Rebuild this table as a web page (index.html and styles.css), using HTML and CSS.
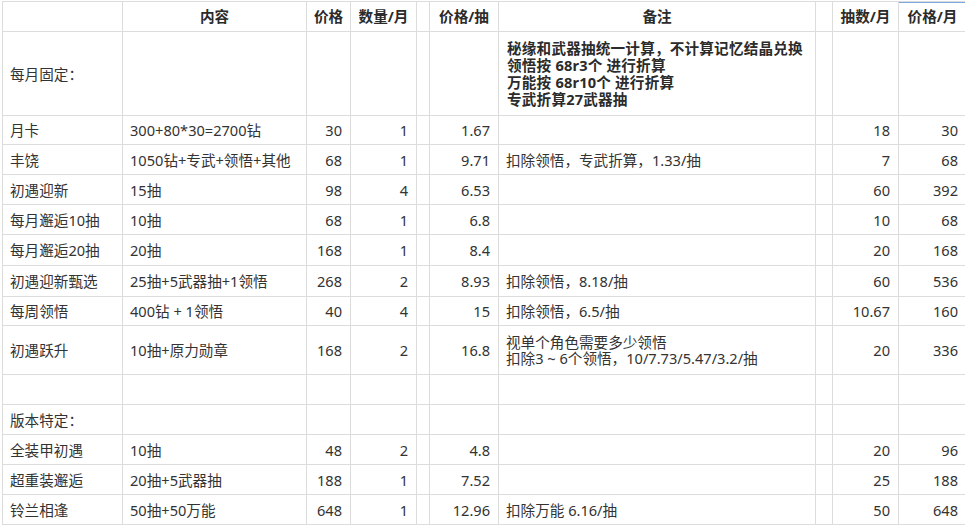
FILE: index.html
```html
<!DOCTYPE html>
<html lang="zh-CN">
<head>
<meta charset="utf-8">
<title>充值性价比</title>
<link rel="stylesheet" href="styles.css">
</head>
<body>
<table class="sheet">
  <colgroup>
    <col class="c-name"><col class="c-content"><col class="c-price"><col class="c-qty"><col class="c-gap1">
    <col class="c-per"><col class="c-note"><col class="c-gap2"><col class="c-pulls"><col class="c-month">
  </colgroup>
  <thead>
    <tr class="r-head">
      <th></th><th>内容</th><th>价格</th><th>数量/月</th><th></th><th>价格/抽</th><th>备注</th><th></th><th>抽数/月</th><th class="sel">价格/月</th>
    </tr>
  </thead>
  <tbody>
    <tr class="r-fixed">
      <td>每月固定：</td><td></td><td></td><td></td><td></td><td></td>
      <td class="bold-note">秘缘和武器抽统一计算，不计算记忆结晶兑换<br>领悟按 68r3个 进行折算<br>万能按 68r10个 进行折算<br>专武折算27武器抽</td>
      <td></td><td></td><td></td>
    </tr>
    <tr class="r29"><td>月卡</td><td>300+80*30=2700钻</td><td class="num">30</td><td class="num">1</td><td></td><td class="num">1.67</td><td></td><td></td><td class="num">18</td><td class="num">30</td></tr>
    <tr class="r30"><td>丰饶</td><td>1050钻+专武+领悟+其他</td><td class="num">68</td><td class="num">1</td><td></td><td class="num">9.71</td><td>扣除领悟，专武折算，1.33/抽</td><td></td><td class="num">7</td><td class="num">68</td></tr>
    <tr class="r30"><td>初遇迎新</td><td>15抽</td><td class="num">98</td><td class="num">4</td><td></td><td class="num">6.53</td><td></td><td></td><td class="num">60</td><td class="num">392</td></tr>
    <tr class="r30"><td>每月邂逅10抽</td><td>10抽</td><td class="num">68</td><td class="num">1</td><td></td><td class="num">6.8</td><td></td><td></td><td class="num">10</td><td class="num">68</td></tr>
    <tr class="r31"><td>每月邂逅20抽</td><td>20抽</td><td class="num">168</td><td class="num">1</td><td></td><td class="num">8.4</td><td></td><td></td><td class="num">20</td><td class="num">168</td></tr>
    <tr class="r31"><td>初遇迎新甄选</td><td>25抽+5武器抽+1领悟</td><td class="num">268</td><td class="num">2</td><td></td><td class="num">8.93</td><td>扣除领悟，8.18/抽</td><td></td><td class="num">60</td><td class="num">536</td></tr>
    <tr class="r29"><td>每周领悟</td><td>400钻 + 1领悟</td><td class="num">40</td><td class="num">4</td><td></td><td class="num">15</td><td>扣除领悟，6.5/抽</td><td></td><td class="num">10.67</td><td class="num">160</td></tr>
    <tr class="r49"><td>初遇跃升</td><td>10抽+原力勋章</td><td class="num">168</td><td class="num">2</td><td></td><td class="num">16.8</td><td class="multi">视单个角色需要多少领悟<br>扣除3 ~ 6个领悟，10/7.73/5.47/3.2/抽</td><td></td><td class="num">20</td><td class="num">336</td></tr>
    <tr class="r30"><td></td><td></td><td></td><td></td><td></td><td></td><td></td><td></td><td></td><td></td></tr>
    <tr class="r30"><td>版本特定：</td><td></td><td></td><td></td><td></td><td></td><td></td><td></td><td></td><td></td></tr>
    <tr class="r30"><td>全装甲初遇</td><td>10抽</td><td class="num">48</td><td class="num">2</td><td></td><td class="num">4.8</td><td></td><td></td><td class="num">20</td><td class="num">96</td></tr>
    <tr class="r30"><td>超重装邂逅</td><td>20抽+5武器抽</td><td class="num">188</td><td class="num">1</td><td></td><td class="num">7.52</td><td></td><td></td><td class="num">25</td><td class="num">188</td></tr>
    <tr class="r30"><td>铃兰相逢</td><td>50抽+50万能</td><td class="num">648</td><td class="num">1</td><td></td><td class="num">12.96</td><td>扣除万能 6.16/抽</td><td></td><td class="num">50</td><td class="num">648</td></tr>
  </tbody>
</table>
</body>
</html>
```

FILE: styles.css
```css
html, body {
  margin: 0;
  padding: 0;
  background: #ffffff;
}
body {
  padding: 1px 0 0 2px;
  font-family: "Noto Sans", "Noto Sans CJK SC", sans-serif;
  font-size: 14.6px;
  color: #333333;
}
.sheet {
  border-collapse: collapse;
  table-layout: fixed;
  width: 964px;
}
.c-name { width: 120px; }
.c-content { width: 184px; }
.c-price { width: 44px; }
.c-qty { width: 66px; }
.c-gap1 { width: 13px; }
.c-per { width: 69px; }
.c-note { width: 317px; }
.c-gap2 { width: 17px; }
.c-pulls { width: 66px; }
.c-month { width: 68px; }

.sheet th, .sheet td {
  border: 1px solid #dcdcdc;
  padding: 0 7px 0 7px;
  white-space: nowrap;
  overflow: hidden;
  line-height: 16px;
  vertical-align: middle;
  text-align: left;
}
.sheet th {
  font-weight: 700;
  text-align: center;
  color: #2b2b2b;
  padding: 0 2px 2px;
}
.sheet th.sel {
  box-shadow: inset 0 1px 0 #7aaae0;
}
.r-head { height: 30px; }
.r-fixed { height: 84px; }
.r29 { height: 29px; }
.r30 { height: 30px; }
.r31 { height: 31px; }
.r49 { height: 49px; }

.sheet td.num {
  text-align: right;
  padding-right: 8px;
}
.sheet td.bold-note {
  font-weight: 700;
  color: #2b2b2b;
  line-height: 17px;
  padding-left: 8px;
  letter-spacing: 0.2px;
}
.sheet td.multi {
  line-height: 16px;
}
```
